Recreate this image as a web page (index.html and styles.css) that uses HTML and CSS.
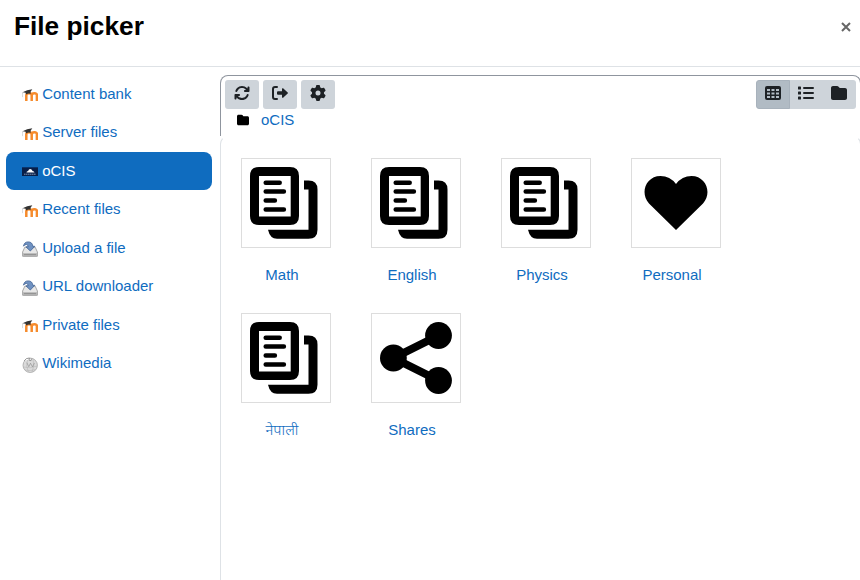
FILE: index.html
```html
<!DOCTYPE html>
<html lang="en">
<head>
<meta charset="utf-8">
<title>File picker</title>
<link rel="stylesheet" href="styles.css">
</head>
<body>
<svg class="sprite" aria-hidden="true">
  <symbol id="moodle" viewBox="0 0 16 16"><path d="M4.300 14V8.500q0-2.200 2.700-2.200t2.700 2.200V14m0-5.500q0-2.200 2.700-2.200t2.500 2.200V14" fill="none" stroke="#f68b2c" stroke-width="2.500"/><path d="M.6 5.200 5.200 3.200 10.300 2.200 8.600 4.800v2.100q-2-1-4.400.7L3.600 5.800z" fill="#333"/><path d="M.8 5q-.6 2.400-.4 5.100" fill="none" stroke="#bbb" stroke-width=".6"/></symbol>
  <symbol id="drive" viewBox="0 0 16 16"><path d="M2.800 6.200h10.400L15.400 11v4q0 .6-.6.6H1.200Q.6 15.600.6 15v-4z" fill="#e7e7e7" stroke="#929292" stroke-width=".8"/><path d="M1 12.200h14v3H1z" fill="#b5b5b5"/><path d="M2 13.600h12" stroke="#777" stroke-width=".6"/><path d="M1.500 5.200Q2.200.9 6.200.9q4.200 0 4.600 4.400h2L8.300 10 3.900 5.800h2.300Q6 3.600 4.500 3.500 2.500 3.400 1.500 5.200z" fill="#6f91c1" stroke="#3f6193" stroke-width=".8"/></symbol>
  <symbol id="globe" viewBox="0 0 16 16"><circle cx="8.200" cy="8.300" r="7.200" fill="#dadada" stroke="#a6a6a6" stroke-width=".8"/><path d="M2 4Q4 .8 7.400 1L7 3.200l2 .5.500-2" fill="#fff" stroke="#777" stroke-width=".7"/><path d="M1.300 10q7 2 13.700-1M3 13q5 1.500 10.500-.5M5.500 3q-2 6 .8 11.800M11 2.400q2 6-.8 12.400" fill="none" stroke="#b0b0b0" stroke-width=".5"/><path d="m4.800 5.700 2 4 1.700-3.500 2 3.700 2-4" fill="none" stroke="#888" stroke-width=".6"/></symbol>
  <symbol id="cloud" viewBox="0 0 16 16"><path d="M0 3.300h16v8.700H0z" fill="#081f49"/><path d="M4.500 8.500q0-1.400 1.600-1.500Q7 4.700 8.800 5.200q1.300.3 1.700 1.700 1.800 0 2 1.600z" fill="#fff"/><path d="M2 10.200h12" stroke="#8596b3" stroke-width="1" stroke-dasharray="1.500 .4"/></symbol>
  <symbol id="folder" viewBox="0 0 512 512"><path d="M64 480H448c35.300 0 64-28.700 64-64V160c0-35.300-28.700-64-64-64H288c-10.100 0-19.600-4.700-25.600-12.800L243.200 57.600C231.100 41.500 212.100 32 192 32H64C28.700 32 0 60.700 0 96V416c0 35.300 28.700 64 64 64z"/></symbol>
  <symbol id="pages" viewBox="0 0 72 72"><path fill-rule="evenodd" d="M9 0h31q9 0 9 9v40q0 9-9 9H9q-9 0-9-9V9q0-9 9-9zm0 9v40.500h31.700V9z"/><path d="M54 13.400h4.500q9 0 9 9v40.400q0 9-9 9H27q-7 0-9-9h40.500V22.400H54z"/><path d="M15.700 15.700h14M15.700 24.600h18.200M15.700 33.600h9.200M15.700 42.500h18.200" fill="none" stroke="#000" stroke-width="4.500" stroke-linecap="round"/></symbol>
</svg>
<div class="dialog">
  <header class="titlebar">
    <h1>File picker</h1>
    <button class="close" aria-label="Close"><svg viewBox="0 0 10 10"><path d="M1 1l8 8M9 1 1 9"/></svg></button>
  </header>
  <div class="body">
    <nav class="repos">
      <a class="repo"><svg><use href="#moodle"/></svg>Content bank</a>
      <a class="repo"><svg><use href="#moodle"/></svg>Server files</a>
      <a class="repo active"><svg><use href="#cloud"/></svg>oCIS</a>
      <a class="repo"><svg><use href="#moodle"/></svg>Recent files</a>
      <a class="repo"><svg><use href="#drive"/></svg>Upload a file</a>
      <a class="repo"><svg><use href="#drive"/></svg>URL downloader</a>
      <a class="repo"><svg><use href="#moodle"/></svg>Private files</a>
      <a class="repo"><svg><use href="#globe"/></svg>Wikimedia</a>
    </nav>
    <main class="panel">
      <div class="tools">
        <div class="bar">
          <button class="btn"><svg viewBox="0 0 512 512"><path d="M105.100 202.600c7.700-21.800 20.200-42.300 37.800-59.800c62.500-62.500 163.800-62.500 226.300 0L386.300 160H352c-17.700 0-32 14.300-32 32s14.300 32 32 32H463.900c17.700 0 32-14.300 32-32V80c0-17.700-14.300-32-32-32s-32 14.300-32 32v35.200L414.400 97.600c-87.500-87.500-229.300-87.500-316.800 0C73.200 122 55.600 150.700 44.800 181.400c-5.900 16.700 2.900 34.900 19.500 40.800s34.900-2.900 40.800-19.500zM39 289.300c-5 1.500-9.800 4.200-13.700 8.200c-4 4-6.700 8.800-8.100 14c-.3 1.200-.6 2.500-.8 3.800c-.3 1.700-.4 3.400-.4 5.100V432c0 17.700 14.300 32 32 32s32-14.300 32-32V396.900l17.600 17.500c87.500 87.400 229.300 87.400 316.700 0c24.400-24.400 42.100-53.100 52.900-83.700c5.900-16.700-2.900-34.900-19.500-40.800s-34.900 2.900-40.800 19.500c-7.700 21.800-20.200 42.300-37.800 59.800c-62.500 62.500-163.800 62.500-226.300 0L125.600 352H160c17.700 0 32-14.300 32-32s-14.300-32-32-32H48.400c-1.600 0-3.200.1-4.800.3s-3.100.5-4.600 1z"/></svg></button>
          <button class="btn"><svg viewBox="0 0 16 16"><path d="M5 2H3Q1 2 1 4v8q0 2 2 2h2" fill="none" stroke="currentColor" stroke-width="2" stroke-linecap="round"/><path d="M6 6.300h4V4q0-1.200 1.100-.7L15.700 7.400q.5.600 0 1.200L11.100 12.700Q10 13.200 10 12V9.700H6q-1 0-1-1V7.300q0-1 1-1z"/></svg></button>
          <button class="btn"><svg viewBox="0 0 512 512"><path d="M495.900 166.600c3.200 8.700.5 18.400-6.400 24.600l-43.300 39.400c1.100 8.300 1.700 16.800 1.700 25.400s-.6 17.100-1.700 25.400l43.300 39.400c6.900 6.200 9.600 15.900 6.400 24.600c-4.400 11.900-9.700 23.300-15.800 34.300l-4.700 8.100c-6.600 11-14 21.400-22.100 31.200c-5.900 7.200-15.700 9.600-24.500 6.800l-55.700-17.700c-13.400 10.300-28.200 18.900-44 25.400l-12.500 57.100c-2 9.100-9 16.300-18.200 17.800c-13.800 2.300-28 3.500-42.500 3.500s-28.700-1.200-42.500-3.500c-9.200-1.500-16.200-8.700-18.200-17.800l-12.500-57.100c-15.800-6.500-30.600-15.100-44-25.400L83.100 425.900c-8.800 2.800-18.600.3-24.500-6.800c-8.100-9.800-15.500-20.200-22.100-31.200l-4.700-8.100c-6.100-11-11.400-22.400-15.800-34.300c-3.200-8.700-.5-18.400 6.400-24.600l43.300-39.400C64.600 273.100 64 264.600 64 256s.6-17.100 1.700-25.400L22.400 191.200c-6.900-6.200-9.600-15.900-6.400-24.600c4.400-11.900 9.700-23.300 15.800-34.300l4.700-8.100c6.600-11 14-21.400 22.100-31.200c5.900-7.200 15.700-9.600 24.500-6.800l55.700 17.700c13.400-10.300 28.200-18.900 44-25.400l12.500-57.100c2-9.100 9-16.300 18.200-17.800C227.300 1.200 241.500 0 256 0s28.700 1.200 42.500 3.500c9.200 1.500 16.200 8.700 18.200 17.800l12.500 57.100c15.800 6.500 30.600 15.100 44 25.400l55.700-17.700c8.800-2.800 18.600-.3 24.500 6.800c8.100 9.800 15.500 20.200 22.100 31.200l4.700 8.100c6.100 11 11.400 22.400 15.800 34.300zM256 336a80 80 0 1 0 0-160 80 80 0 1 0 0 160z"/></svg></button>
          <div class="views">
            <button class="btn on"><svg viewBox="0 0 16 16"><path fill-rule="evenodd" d="M2 1h12q2 0 2 2v10q0 2-2 2H2q-2 0-2-2V3q0-2 2-2zm0 3v2h3V4zm4.500 0v2h3V4zM11 4v2h3V4zM2 7.500v2h3v-2zm4.500 0v2h3v-2zm4.500 0v2h3v-2zM2 11v2h3v-2zm4.500 0v2h3v-2zm4.500 0v2h3v-2z"/></svg></button>
            <button class="btn"><svg viewBox="0 0 16 16"><rect y="1.500" width="3" height="3" rx=".6"/><rect y="6.500" width="3" height="3" rx=".6"/><rect y="11.500" width="3" height="3" rx=".6"/><path d="M6 3h9M6 8h9M6 13h9" stroke="currentColor" stroke-width="2" stroke-linecap="round"/></svg></button>
            <button class="btn"><svg><use href="#folder"/></svg></button>
          </div>
        </div>
        <div class="path"><svg><use href="#folder"/></svg><a>oCIS</a></div>
      </div>
      <div class="content">
        <a class="file"><span class="thumb"><svg><use href="#pages"/></svg></span><span class="name">Math</span></a>
        <a class="file"><span class="thumb"><svg><use href="#pages"/></svg></span><span class="name">English</span></a>
        <a class="file"><span class="thumb"><svg><use href="#pages"/></svg></span><span class="name">Physics</span></a>
        <a class="file"><span class="thumb"><svg viewBox="0 0 72 72"><path d="M36 63 9 36.500C-.5 26 6 9 20.500 9q9.500 0 15.500 8 6-8 15.500-8C66 9 72.500 26 63 36.500z"/></svg></span><span class="name">Personal</span></a>
        <a class="file"><span class="thumb"><svg><use href="#pages"/></svg></span><span class="name light" lang="ne">नेपाली</span></a>
        <a class="file"><span class="thumb"><svg viewBox="0 0 72 72"><path d="M58.500 13.500 13.500 36l45 22.500" fill="none" stroke="#000" stroke-width="8"/><circle cx="58.500" cy="13.500" r="13.400"/><circle cx="13.400" cy="36" r="13.400"/><circle cx="58.500" cy="58.500" r="13.400"/></svg></span><span class="name">Shares</span></a>
      </div>
    </main>
  </div>
</div>
</body>
</html>
```
FILE: styles.css
```css
* { box-sizing: border-box; }
body {
  margin: 0;
  overflow: hidden;
  background: #fff;
  color: #000;
  font: 15px/22.5px "Liberation Sans", "Noto Sans", sans-serif;
}
button { border: 0; padding: 0; background: none; }
svg { display: block; flex: none; }
.sprite { display: none; }
.dialog { display: flex; flex-direction: column; height: 580px; }
.titlebar {
  display: flex;
  justify-content: space-between;
  height: 67px;
  padding: 11px 9px 0 14px;
  border-bottom: 1px solid #dee2e6;
}
h1 { margin: 0; font-size: 26.250px; line-height: 31px; }
.close { height: 10px; margin-top: 11px; }
.close svg { width: 10px; height: 10px; fill: none; stroke: #666; stroke-width: 2; }
.body { display: flex; flex: 1; padding-top: 8px; }
.repos { flex: none; width: 206px; margin: -0.200px 8px 0 6px; }
.repo {
  display: flex;
  align-items: center;
  height: 38.500px;
  padding: 0 16px;
  gap: 4.200px;
  border-radius: 8px;
  color: #0f6cbf;
}
.repo svg { width: 16px; height: 16px; margin-top: 2px; }
.repo.active { background: #0f6cbf; color: #fff; }
.panel { display: flex; flex-direction: column; flex: none; width: 641px; }
.tools {
  height: 61px;
  padding: 4px;
  border: 1px solid #8f959e;
  border-bottom: 0;
  border-radius: 8px 8px 0 0;
}
.bar { display: flex; gap: 4px; }
.btn {
  display: flex;
  justify-content: center;
  width: 34px;
  height: 29px;
  padding-top: 5px;
  border-radius: 3px;
  background: #ced4da;
  color: #1d2125;
}
.btn svg { width: 16px; height: 16px; fill: currentColor; }
.views { display: flex; margin-left: auto; }
.views .btn + .btn { margin-left: -1px; border-radius: 0; }
.views .btn:last-child { border-radius: 0 3px 3px 0; }
.views .btn.on {
  position: relative;
  border: 1px solid #a8b2bc;
  border-radius: 3px 0 0 3px;
  background: #b1bbc4;
  padding-top: 4px;
}
.path { display: flex; align-items: center; gap: 12px; padding-left: 12px; color: #0f6cbf; }
.path svg { width: 12px; height: 12px; fill: #000; }
.content {
  display: flex;
  flex: 1;
  flex-wrap: wrap;
  align-content: flex-start;
  padding: 21px 20px 0;
  border: 1px solid #dee2e6;
  border-top-color: transparent;
  border-bottom: 0;
  border-radius: 8px 8px 0 0;
}
.file { display: block; width: 130px; height: 155px; color: #0f6cbf; }
.thumb { display: block; width: 90px; height: 90px; padding: 8px; border: 1px solid #ddd; }
.thumb svg { width: 72px; height: 72px; fill: #000; }
.name { display: block; width: 82px; margin-top: 16px; text-align: center; }
.name.light { font-weight: 300; }
```
